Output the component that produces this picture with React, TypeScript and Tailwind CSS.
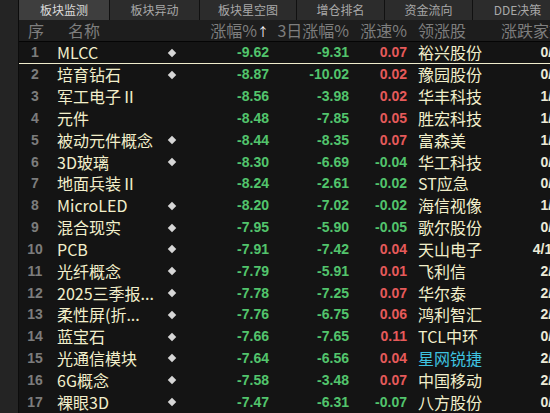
import React from "react";

type Row = {
  name: string;
  dot: boolean;
  chg: string;
  chg3: string;
  speed: string;
  lead: string;
  leadCyan?: boolean;
  ud: string;
};

const rows: Row[] = [
  { name: "MLCC", dot: true, chg: "-9.62", chg3: "-9.31", speed: "0.07", lead: "裕兴股份", ud: "0/9" },
  { name: "培育钻石", dot: true, chg: "-8.87", chg3: "-10.02", speed: "0.02", lead: "豫园股份", ud: "0/8" },
  { name: "军工电子Ⅱ", dot: false, chg: "-8.56", chg3: "-3.98", speed: "0.02", lead: "华丰科技", ud: "1/7" },
  { name: "元件", dot: false, chg: "-8.48", chg3: "-7.85", speed: "0.05", lead: "胜宏科技", ud: "1/9" },
  { name: "被动元件概念", dot: true, chg: "-8.44", chg3: "-8.35", speed: "0.07", lead: "富森美", ud: "1/8" },
  { name: "3D玻璃", dot: true, chg: "-8.30", chg3: "-6.69", speed: "-0.04", lead: "华工科技", ud: "0/9" },
  { name: "地面兵装Ⅱ", dot: false, chg: "-8.24", chg3: "-2.61", speed: "-0.02", lead: "ST应急", ud: "0/7" },
  { name: "MicroLED", dot: true, chg: "-8.20", chg3: "-7.02", speed: "-0.02", lead: "海信视像", ud: "1/9" },
  { name: "混合现实", dot: true, chg: "-7.95", chg3: "-5.90", speed: "-0.05", lead: "歌尔股份", ud: "0/9" },
  { name: "PCB", dot: true, chg: "-7.91", chg3: "-7.42", speed: "0.04", lead: "天山电子", ud: "4/15" },
  { name: "光纤概念", dot: true, chg: "-7.79", chg3: "-5.91", speed: "0.01", lead: "飞利信", ud: "2/9" },
  { name: "2025三季报...", dot: true, chg: "-7.78", chg3: "-7.25", speed: "0.07", lead: "华尔泰", ud: "2/8" },
  { name: "柔性屏(折...", dot: true, chg: "-7.76", chg3: "-6.75", speed: "0.06", lead: "鸿利智汇", ud: "2/9" },
  { name: "蓝宝石", dot: true, chg: "-7.66", chg3: "-7.65", speed: "0.11", lead: "TCL中环", ud: "0/9" },
  { name: "光通信模块", dot: true, chg: "-7.64", chg3: "-6.56", speed: "0.04", lead: "星网锐捷", leadCyan: true, ud: "2/9" },
  { name: "6G概念", dot: true, chg: "-7.58", chg3: "-3.48", speed: "0.07", lead: "中国移动", ud: "2/9" },
  { name: "裸眼3D", dot: true, chg: "-7.47", chg3: "-6.31", speed: "-0.07", lead: "八方股份", ud: "0/9" },
];

const tabs = [
  { label: "板块监测", w: "w-[91px]", active: true },
  { label: "板块异动", w: "w-[90px]" },
  { label: "板块星空图", w: "w-[97px]" },
  { label: "增仓排名", w: "w-[88px]" },
  { label: "资金流向", w: "w-[88px]" },
  { label: "DDE决策", w: "w-[90px]" },
];

const cjk = "font-['Noto_Sans_CJK_SC',sans-serif]";
const num = "font-['Liberation_Sans',sans-serif] font-bold text-[14px]";

export default function App() {
  return (
    <div className="flex h-[413px] w-[550px] overflow-hidden bg-[#141414]">
      <div className="w-[19px] shrink-0 bg-[#242424] border-r border-[#0c0c0c]" />
      <div className="flex flex-col shrink-0 w-[560px]">
        {/* tabs */}
        <div className={`flex h-[20px] bg-[#2c2c2c] ${cjk} text-[12px] leading-[20px]`}>
          {tabs.map((t) => (
            <div
              key={t.label}
              className={`${t.w} shrink-0 text-center border-r border-[#111] ${
                t.active ? "bg-[#3e3e3e] text-[#dcdcdc]" : "text-[#a8a8a8]"
              }`}
            >
              {t.label}
            </div>
          ))}
        </div>
        {/* header */}
        <div
          className={`flex h-[22px] bg-[#1d1d1d] border-b border-[#050505] ${cjk} text-[16px] leading-[21px] text-[#7e7e7e]`}
        >
          <div className="w-[30px] shrink-0 text-center pl-[4px]">序</div>
          <div className="w-[131px] shrink-0 pl-[19px]">名称</div>
          <div className="w-[89px] shrink-0 text-right">
            涨幅%<span className="text-white text-[12px]">↑</span>
          </div>
          <div className="w-[80px] shrink-0 text-right">3日涨幅%</div>
          <div className="w-[58px] shrink-0 text-right">涨速%</div>
          <div className="w-[82px] shrink-0 pl-[11px]">领涨股</div>
          <div className="w-[76px] shrink-0 text-right">涨跌家数</div>
        </div>
        {/* rows */}
        {rows.map((r, i) => (
          <div
            key={i}
            className={`flex h-[22px] items-center leading-[21px] ${
              i === 0 ? "border-b border-[#efeccc]" : ""
            }`}
          >
            <div className={`w-[30px] shrink-0 text-center pl-[2px] ${num} text-[#7c7c7c]`}>
              {i + 1}
            </div>
            <div className={`w-[115px] shrink-0 pl-[8px] ${cjk} text-[16px] text-[#f2efcb] whitespace-nowrap`}>
              {r.name}
            </div>
            <div className="w-[16px] shrink-0 flex justify-center">
              {r.dot && <div className="w-[6px] h-[6px] rotate-45 bg-[#d6d6d6]" />}
            </div>
            <div className={`w-[89px] shrink-0 text-right ${num} text-[#52c46c]`}>{r.chg}</div>
            <div className={`w-[80px] shrink-0 text-right ${num} text-[#52c46c]`}>{r.chg3}</div>
            <div
              className={`w-[58px] shrink-0 text-right ${num} ${
                r.speed.startsWith("-") ? "text-[#52c46c]" : "text-[#e65a5a]"
              }`}
            >
              {r.speed}
            </div>
            <div
              className={`w-[82px] shrink-0 pl-[11px] ${cjk} text-[16px] whitespace-nowrap ${
                r.leadCyan ? "text-[#3ec3e0]" : "text-[#f2efcb]"
              }`}
            >
              {r.lead}
            </div>
            <div className={`w-[71px] shrink-0 text-right ${num} text-[#ecead8]`}>{r.ud}</div>
          </div>
        ))}
      </div>
    </div>
  );
}
